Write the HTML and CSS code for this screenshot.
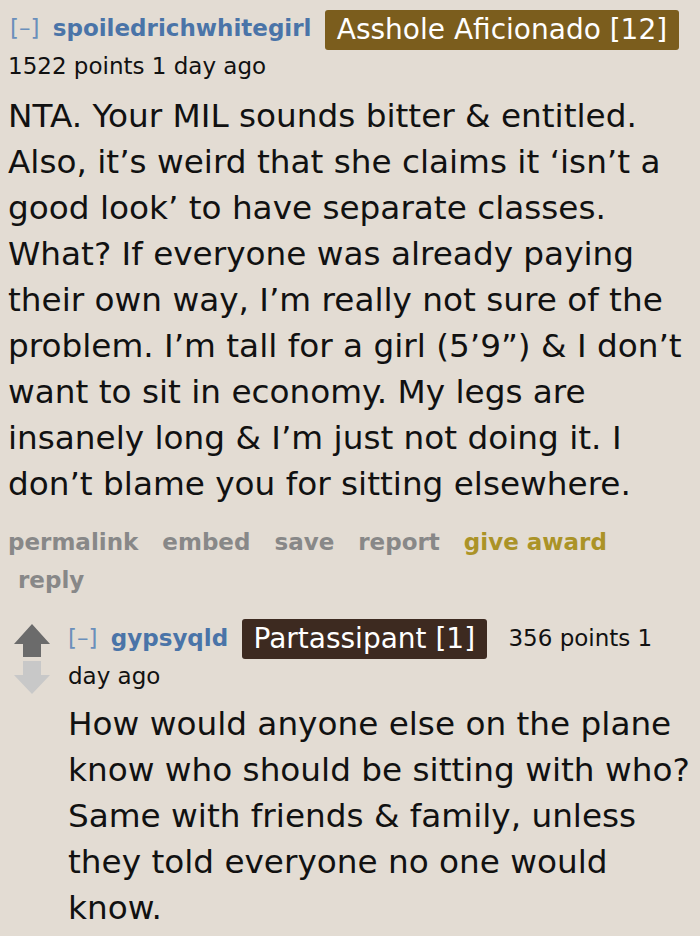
FILE: index.html
```html
<!DOCTYPE html>
<html>
<head>
<meta charset="utf-8">
<link rel="stylesheet" href="styles.css">
</head>
<body>
<div class="comment">
  <p class="tagline"><span class="expand">[–]</span> <a class="author">spoiledrichwhitegirl</a> <span class="flair flair-gold">Asshole Aficionado [12]</span> <span class="score">1522 points 1 day ago</span></p>
  <div class="md">NTA. Your MIL sounds bitter &amp; entitled. Also, it’s weird that she claims it ‘isn’t a good look’ to have separate classes. What? If everyone was already paying their own way, I’m really not sure of the problem. I’m tall for a girl (5’9”) &amp; I don’t want to sit in economy. My legs are insanely long &amp; I’m just not doing it. I don’t blame you for sitting elsewhere.</div>
  <ul class="buttons">
    <li>permalink</li>
    <li>embed</li>
    <li>save</li>
    <li>report</li>
    <li class="award">give award</li>
    <li class="reply">reply</li>
  </ul>
  <div class="child">
    <div class="votes">
      <svg class="arrow" width="36" height="33" viewBox="0 0 36 33"><path d="M18 0 L36 20 L27 20 L27 33 L9 33 L9 20 L0 20 Z" fill="#6b6b6b"/></svg>
      <svg class="arrow" width="36" height="33" viewBox="0 0 36 33"><path d="M9 0 L27 0 L27 14 L36 14 L18 33 L0 14 L9 14 Z" fill="#c8c8c8"/></svg>
    </div>
    <div class="entry">
      <p class="tagline"><span class="expand">[–]</span> <a class="author">gypsyqld</a> <span class="flair flair-dark">Partassipant [1]</span> <span class="score">356 points 1 day ago</span></p>
      <div class="md">How would anyone else on the plane know who should be sitting with who? Same with friends &amp; family, unless they told everyone no one would know.</div>
    </div>
  </div>
</div>
</body>
</html>
```

FILE: styles.css
```css
html, body {
  margin: 0;
  padding: 0;
  background: #e3dcd3;
}
body {
  font-family: "DejaVu Sans", Verdana, sans-serif;
  color: #111;
  width: 700px;
  height: 936px;
  overflow: hidden;
}
.comment {
  padding: 10px 0 0 8px;
}
.tagline {
  margin: 0;
  font-size: 23px;
  line-height: 37px;
}
.expand {
  color: #6a8fbb;
  font-weight: normal;
  margin-right: 6px;
}
.comment > .tagline .expand {
  margin-left: 2px;
}
.author {
  color: #4a74a8;
  font-weight: bold;
}
.flair {
  display: inline-block;
  color: #fff;
  font-size: 28px;
  line-height: 36px;
  padding: 2px 12px;
  border-radius: 3px;
  vertical-align: middle;
  margin: -2px 14px -2px 6px;
}
.flair-gold {
  background: #7b5d1d;
}
.flair-dark {
  background: #3d2a20;
}
.score {
  color: #111;
}
.md {
  font-size: 32.7px;
  line-height: 46px;
  margin-top: 8px;
}
.buttons {
  list-style: none;
  margin: 16px 0 0 0;
  padding: 0;
  display: flex;
  flex-wrap: wrap;
  column-gap: 24px;
  font-size: 23px;
  font-weight: bold;
  color: #888;
  line-height: 38px;
}
.buttons .award {
  color: #ab9327;
}
.buttons .reply {
  padding-left: 10px;
}
.child {
  display: flex;
  margin-top: 20px;
}
.votes {
  width: 60px;
  padding-left: 6px;
  box-sizing: border-box;
  display: flex;
  flex-direction: column;
  gap: 4px;
  padding-top: 5px;
  flex-shrink: 0;
}
.entry {
  flex: 1;
}
.entry .tagline {
  line-height: 38px;
  padding-right: 10px;
}
.entry .md {
  margin-top: 6px;
}
```
